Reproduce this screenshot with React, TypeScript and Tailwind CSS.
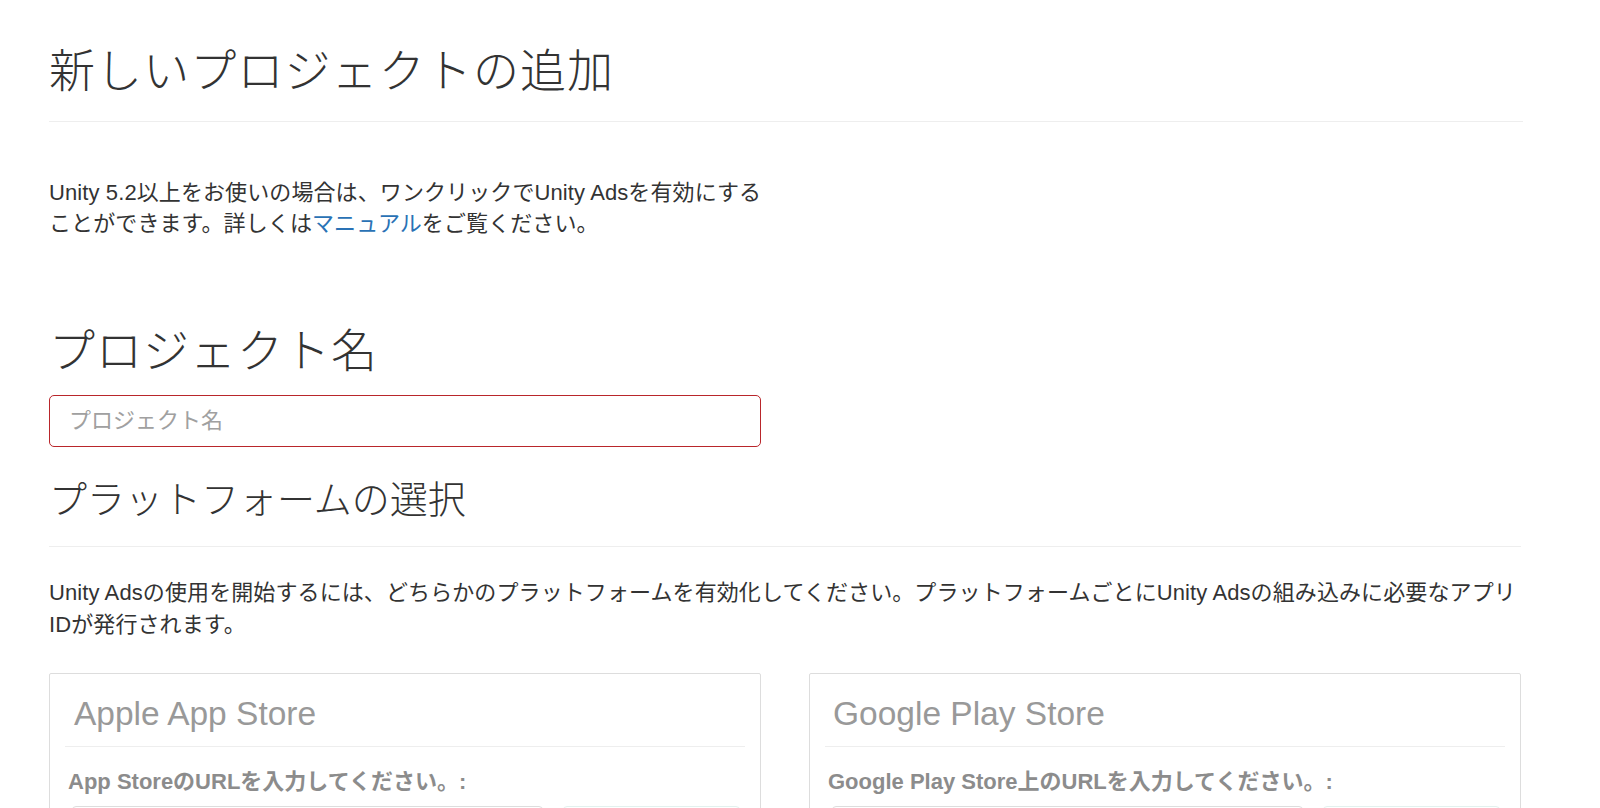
import React from "react";

const FONT = '"Liberation Sans", "Noto Sans CJK JP", sans-serif';

function Card({ title, label, titlePad, labelPad }: { title: string; label: string; titlePad: string; labelPad: string }) {
  return (
    <div className="w-[712px] h-[200px] border border-[#dddddd] rounded-[2px] px-[15px] pt-[20px]">
      <h3 className={`text-[33.5px] leading-[40px] text-[#999999] font-normal whitespace-nowrap ${titlePad}`}>{title}</h3>
      <div className="mt-[12px] border-t border-[#eeeeee]" />
      <div className={`mt-[23px] text-[22px] leading-[24px] font-bold text-[#8c8c8c] whitespace-nowrap ${labelPad}`}>{label}</div>
      <div className="mt-[12px] flex gap-[20px] pl-[7px]">
        <div className="w-[471px] h-[40px] border border-[#dddddd] rounded-[4px] bg-white" />
        <div className="w-[177px] h-[40px] border border-[#e3f1ee] rounded-[4px] bg-white" />
      </div>
    </div>
  );
}

export default function App() {
  return (
    <div className="min-h-screen bg-white text-[#333333] overflow-hidden" style={{ fontFamily: FONT }}>
      <div className="pl-[49px] w-[1523px]">
        <div className="pt-[43px] pb-[22px] border-b border-[#eeeeee]">
          <h1 className="text-[46px] leading-[56px] font-light tracking-[1.1px] whitespace-nowrap">新しいプロジェクトの追加</h1>
        </div>

        <p className="mt-[55px] text-[22px] leading-[31px] tracking-[0.1px] whitespace-nowrap">
          Unity 5.2以上をお使いの場合は、ワンクリックでUnity Adsを有効にする
          <br />
          ことができます。詳しくは<span className="text-[#2a72b5]">マニュアル</span>をご覧ください。
        </p>

        <h2 className="mt-[84px] text-[46px] leading-[56px] font-light tracking-[1px] whitespace-nowrap">プロジェクト名</h2>

        <input
          type="text"
          placeholder="プロジェクト名"
          className="mt-[16px] block w-[712px] h-[52px] border border-[#b9262b] rounded-[5px] px-[19px] text-[22px] placeholder:text-[#a0a0a0] outline-none"
          style={{ fontFamily: FONT }}
        />

        <div className="mt-[30px] pb-[23px] border-b border-[#eeeeee] w-[1472px]">
          <h2 className="text-[38px] leading-[46px] font-light whitespace-nowrap">プラットフォームの選択</h2>
        </div>

        <p className="mt-[30px] text-[22px] leading-[32px] tracking-[0.1px] whitespace-nowrap">
          Unity Adsの使用を開始するには、どちらかのプラットフォームを有効化してください。プラットフォームごとにUnity Adsの組み込みに必要なアプリ
          <br />
          IDが発行されます。
        </p>

        <div className="mt-[32px] flex gap-[48px]">
          <Card title="Apple App Store" label="App StoreのURLを入力してください。:" titlePad="pl-[9px]" labelPad="pl-[3px]" />
          <Card title="Google Play Store" label="Google Play Store上のURLを入力してください。:" titlePad="pl-[8px]" labelPad="pl-[3px]" />
        </div>
      </div>
    </div>
  );
}
